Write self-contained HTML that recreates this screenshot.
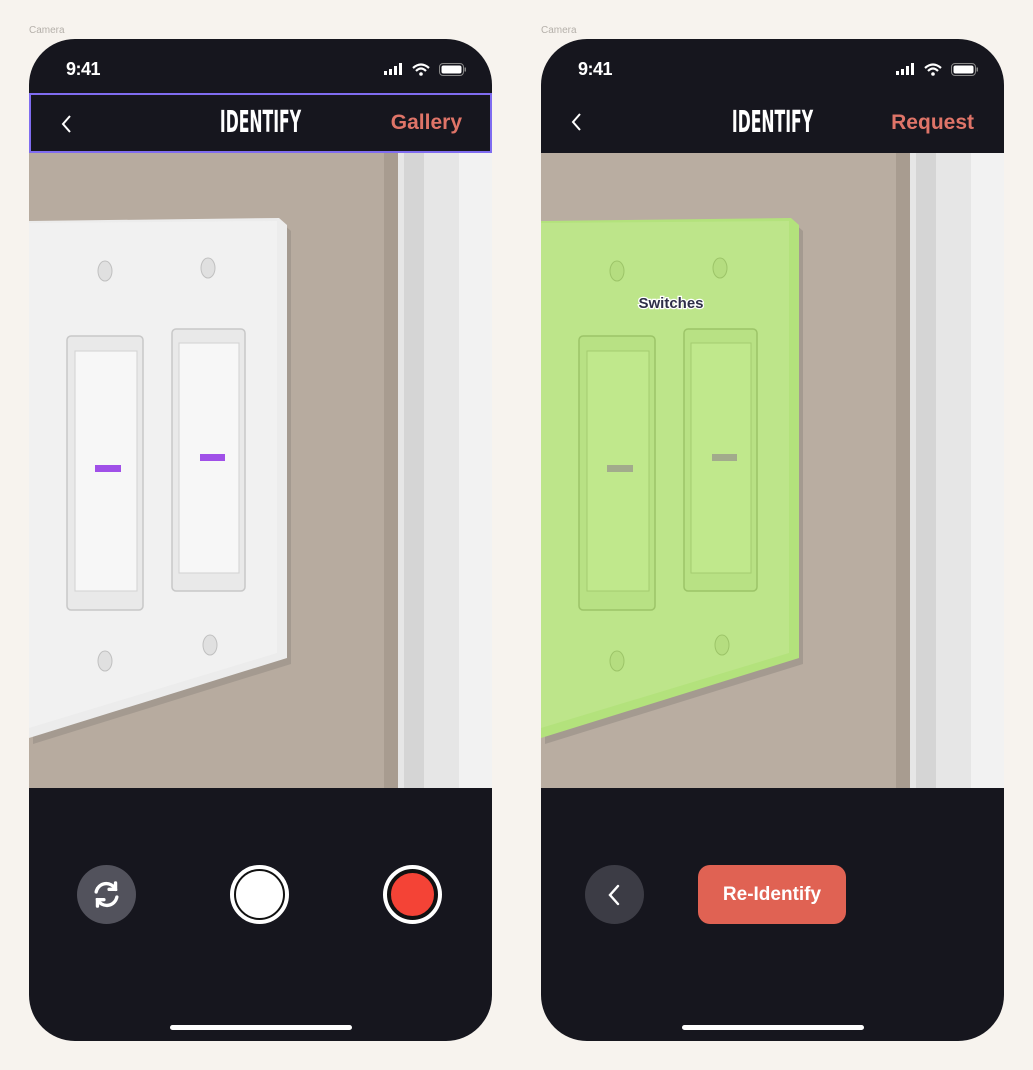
<!DOCTYPE html>
<html><head><meta charset="utf-8"><style>
*{margin:0;padding:0;box-sizing:border-box}
body{width:1033px;height:1070px;background:#f7f3ee;position:relative;font-family:"Liberation Sans",sans-serif;overflow:hidden}
.lbl{position:absolute;top:25px;font-size:10px;color:#b5b0aa}
.phone{position:absolute;top:39px;width:463px;height:1002px;background:#16161e;border-radius:46px;overflow:hidden}
.time{position:absolute;left:37px;top:20px;color:#fff;font-size:18px;font-weight:bold;letter-spacing:-0.5px}
.nav{position:absolute;left:0;top:54px;width:463px;height:60px}
.title{position:absolute;left:0;right:0;top:10px;text-align:center;color:#fff;font-family:"DejaVu Sans Condensed","Liberation Sans Narrow",sans-serif;font-weight:bold;font-size:30px;transform:scaleX(0.58);letter-spacing:0px}
.act{position:absolute;top:16px;color:#df7468;font-size:21px;font-weight:bold}
.photo{position:absolute;left:0;top:114px}
.home{position:absolute;left:141px;top:986px;width:182px;height:5px;border-radius:3px;background:#fff}
</style></head><body>
<div class="lbl" style="left:29px">Camera</div>
<div class="lbl" style="left:541px">Camera</div>

<!-- LEFT PHONE -->
<div class="phone" style="left:29px">
 <div class="time">9:41</div>
 <svg style="position:absolute;left:355px;top:23px" width="82" height="16" viewBox="0 0 82 16">
  <rect x="0" y="9" width="3" height="4" fill="#fff"/><rect x="5" y="7" width="3" height="6" fill="#fff"/><rect x="10" y="4" width="3" height="9" fill="#fff"/><rect x="15" y="1" width="3" height="12" fill="#fff"/>
  <path d="M29 6 Q37 -1 45 6" stroke="#fff" stroke-width="2.2" fill="none"/><path d="M32 9 Q37 4 42 9" stroke="#fff" stroke-width="2.2" fill="none"/><circle cx="37" cy="12" r="1.8" fill="#fff"/>
  <rect x="55.5" y="1.5" width="24" height="12" rx="3.5" stroke="#888" fill="none"/><rect x="57.5" y="3.5" width="20" height="8" rx="2" fill="#fff"/><rect x="80.5" y="5.5" width="1.5" height="4" fill="#888"/>
 </svg>
 <div class="nav" style="border:2px solid #7f6cf0">
  <svg style="position:absolute;left:29px;top:18px" width="14" height="22"><path d="M10 3 L3 11 L10 19" stroke="#fff" stroke-width="2" fill="none"/></svg>
  <div class="title">IDENTIFY</div>
  <div class="act" style="right:28px">Gallery</div>
 </div>
 <svg class="photo" width="463" height="635" viewBox="0 0 463 635">
  <rect width="463" height="635" fill="#b9ada1"/>
  <rect x="0" y="0" width="360" height="635" fill="#b7ab9f"/>
  <rect x="355" y="0" width="18" height="635" fill="#a89c90"/>
  <rect x="369" y="0" width="94" height="635" fill="#e6e6e6"/>
  <rect x="375" y="0" width="20" height="635" fill="#d5d5d5"/>
  <rect x="430" y="0" width="33" height="635" fill="#f2f2f2"/>
  <polygon points="0,68 250,65 258,72 258,505 0,585" fill="#a49a90" transform="translate(4,6)"/>
  <polygon points="0,68 250,65 258,72 258,505 0,585" fill="#ececec"/>
  <polygon points="0,70 248,68 248,500 0,575" fill="#f1f1f1"/>
  <g fill="#e9e9e9" stroke="#c8c8c8" stroke-width="1.5">
   <rect x="38" y="183" width="76" height="274" rx="4"/><rect x="143" y="176" width="73" height="262" rx="4"/>
  </g>
  <g fill="#f7f7f7" stroke="#d2d2d2"><rect x="46" y="198" width="62" height="240"/><rect x="150" y="190" width="60" height="230"/></g>
  <rect x="66" y="312" width="26" height="7" fill="#a050e8"/><rect x="171" y="301" width="25" height="7" fill="#a050e8"/>
  <g fill="#e0e0e0" stroke="#c0c0c0"><ellipse cx="76" cy="118" rx="7" ry="10"/><ellipse cx="179" cy="115" rx="7" ry="10"/><ellipse cx="76" cy="508" rx="7" ry="10"/><ellipse cx="181" cy="492" rx="7" ry="10"/></g>
 </svg>
 <div style="position:absolute;left:48px;top:826px;width:59px;height:59px;border-radius:50%;background:#52525c"></div>
 <svg style="position:absolute;left:62px;top:840px" width="31" height="31" viewBox="0 0 24 24" fill="none" stroke="#fff" stroke-width="2.6" stroke-linecap="round"><path d="M4 10 A8 8 0 0 1 19 8"/><path d="M20 14 A8 8 0 0 1 5 16"/><path d="M19 3 V8 H14" /><path d="M5 21 V16 H10"/></svg>
 <div style="position:absolute;left:201px;top:826px;width:59px;height:59px;border-radius:50%;background:#fff;border:4px solid #fff"><div style="width:51px;height:51px;border-radius:50%;border:2px solid #111;background:#fff"></div></div>
 <div style="position:absolute;left:354px;top:826px;width:59px;height:59px;border-radius:50%;background:#fff;padding:4px"><div style="width:51px;height:51px;border-radius:50%;border:4px solid #111;background:#f44336"></div></div>
 <div class="home"></div>
</div>

<!-- RIGHT PHONE -->
<div class="phone" style="left:541px">
 <div class="time">9:41</div>
 <svg style="position:absolute;left:355px;top:23px" width="82" height="16" viewBox="0 0 82 16">
  <rect x="0" y="9" width="3" height="4" fill="#fff"/><rect x="5" y="7" width="3" height="6" fill="#fff"/><rect x="10" y="4" width="3" height="9" fill="#fff"/><rect x="15" y="1" width="3" height="12" fill="#fff"/>
  <path d="M29 6 Q37 -1 45 6" stroke="#fff" stroke-width="2.2" fill="none"/><path d="M32 9 Q37 4 42 9" stroke="#fff" stroke-width="2.2" fill="none"/><circle cx="37" cy="12" r="1.8" fill="#fff"/>
  <rect x="55.5" y="1.5" width="24" height="12" rx="3.5" stroke="#888" fill="none"/><rect x="57.5" y="3.5" width="20" height="8" rx="2" fill="#fff"/><rect x="80.5" y="5.5" width="1.5" height="4" fill="#888"/>
 </svg>
 <div class="nav">
  <svg style="position:absolute;left:29px;top:18px" width="14" height="22"><path d="M10 3 L3 11 L10 19" stroke="#fff" stroke-width="2" fill="none"/></svg>
  <div class="title" style="top:12px">IDENTIFY</div>
  <div class="act" style="right:30px;top:18px">Request</div>
 </div>
 <svg class="photo" width="463" height="635" viewBox="0 0 463 635">
  <rect width="463" height="635" fill="#b9ada1"/>
  <rect x="355" y="0" width="18" height="635" fill="#a89c90"/>
  <rect x="369" y="0" width="94" height="635" fill="#e6e6e6"/>
  <rect x="375" y="0" width="20" height="635" fill="#d5d5d5"/>
  <rect x="430" y="0" width="33" height="635" fill="#f2f2f2"/>
  <polygon points="0,68 250,65 258,72 258,505 0,585" fill="#a49a90" transform="translate(4,6)"/>
  <polygon points="0,68 250,65 258,72 258,505 0,585" fill="#b3e27c"/>
  <polygon points="0,70 248,68 248,500 0,575" fill="#bde58a"/>
  <g fill="#b8e184" stroke="#9cc468" stroke-width="1.5">
   <rect x="38" y="183" width="76" height="274" rx="4"/><rect x="143" y="176" width="73" height="262" rx="4"/>
  </g>
  <g fill="#c0e88c" stroke="#a4cc70"><rect x="46" y="198" width="62" height="240"/><rect x="150" y="190" width="60" height="230"/></g>
  <rect x="66" y="312" width="26" height="7" fill="#a2ab8c"/><rect x="171" y="301" width="25" height="7" fill="#a2ab8c"/>
  <g fill="#b5dd80" stroke="#9cc468"><ellipse cx="76" cy="118" rx="7" ry="10"/><ellipse cx="179" cy="115" rx="7" ry="10"/><ellipse cx="76" cy="508" rx="7" ry="10"/><ellipse cx="181" cy="492" rx="7" ry="10"/></g>
  <text x="130" y="155" text-anchor="middle" font-family="Liberation Sans, sans-serif" font-weight="bold" font-size="15" fill="#2e2e48" stroke="#fff" stroke-width="2.5" paint-order="stroke">Switches</text>
 </svg>
 <div style="position:absolute;left:44px;top:826px;width:59px;height:59px;border-radius:50%;background:#3c3c45"></div>
 <svg style="position:absolute;left:64px;top:844px" width="18" height="24"><path d="M13 3 L5 12 L13 21" stroke="#fff" stroke-width="2.4" fill="none" stroke-linecap="round"/></svg>
 <div style="position:absolute;left:157px;top:826px;width:148px;height:59px;border-radius:12px;background:#e06253;color:#fff;font-size:19px;font-weight:bold;text-align:center;line-height:59px">Re-Identify</div>
 <div class="home"></div>
</div>
</body></html>
